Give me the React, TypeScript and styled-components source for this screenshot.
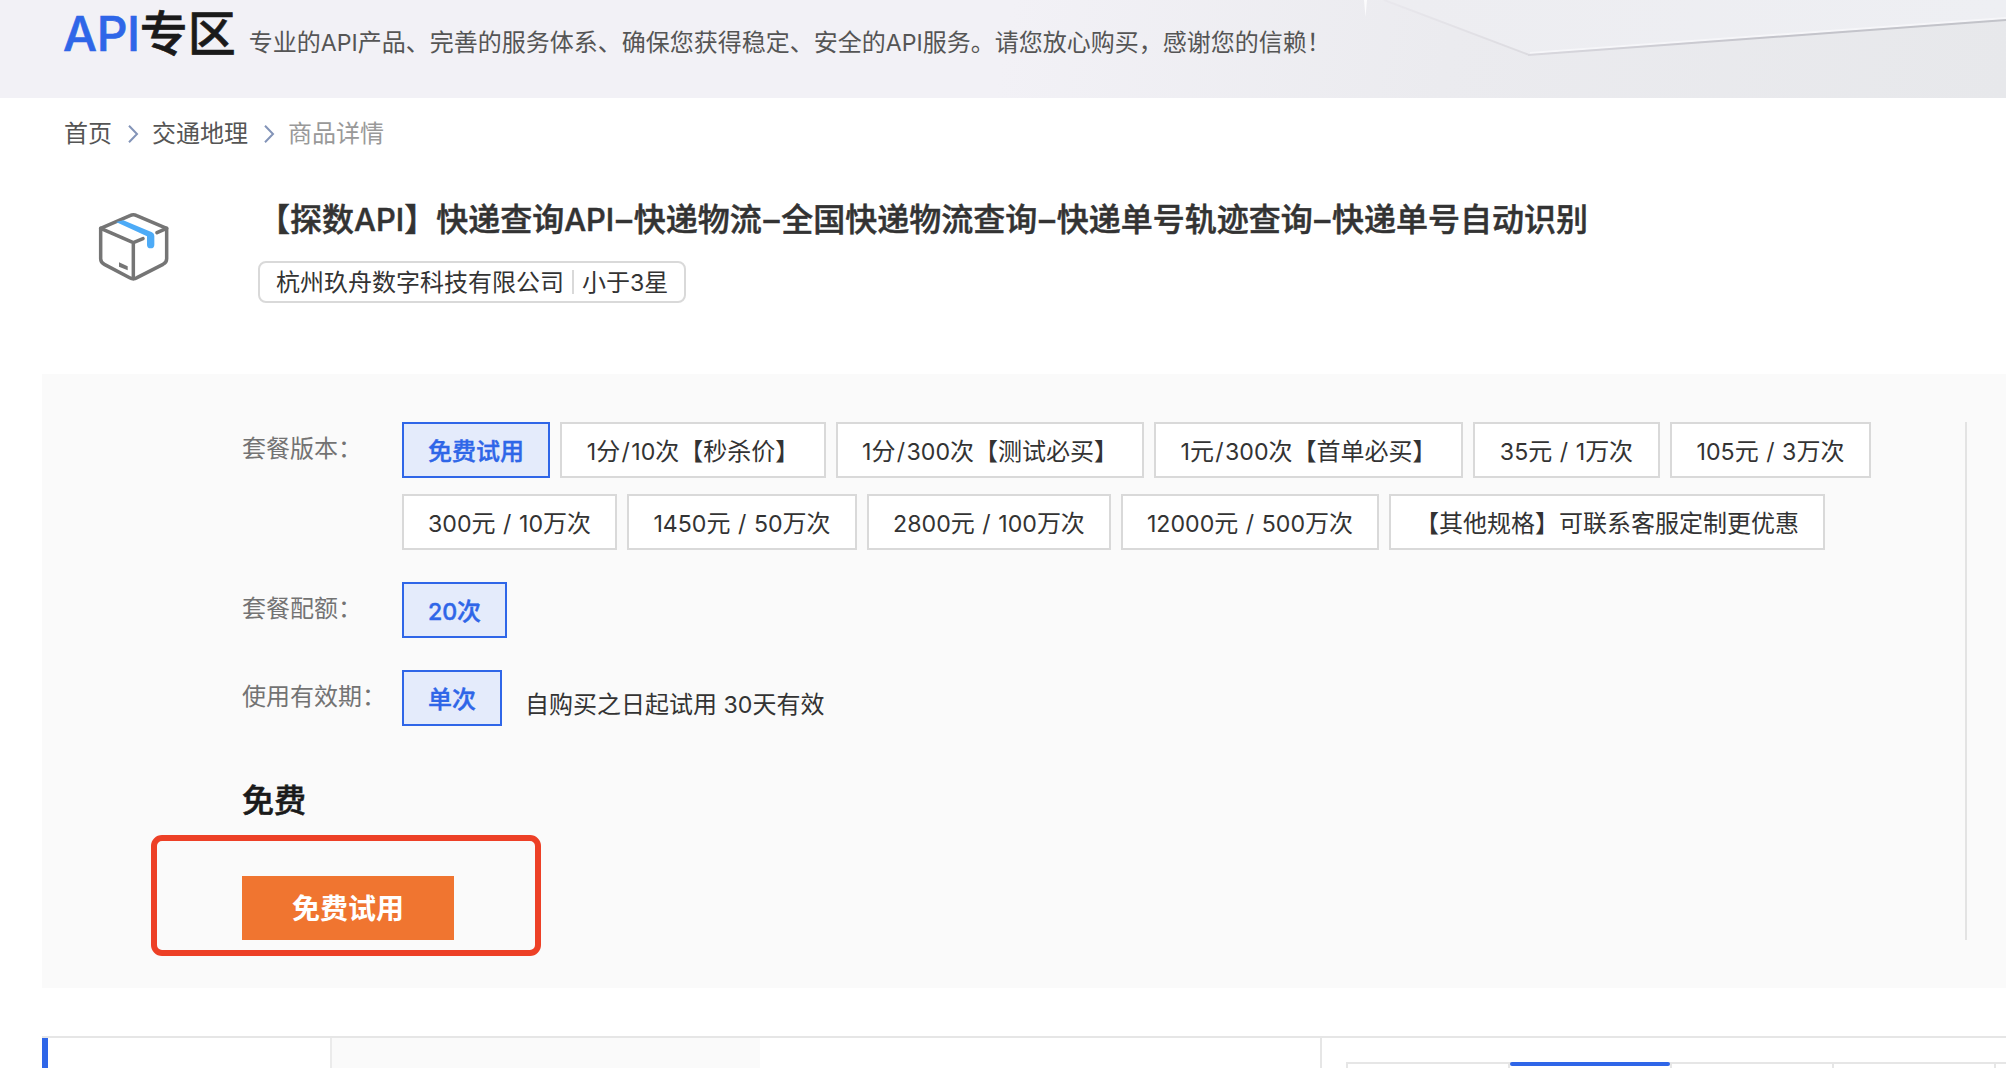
import React from "react";
import styled, { createGlobalStyle } from "styled-components";

const GlobalStyle = createGlobalStyle`
  *, *::before, *::after { box-sizing: border-box; }
  body {
    margin: 0;
    background: #fff;
    font-family: Inter, "Noto Sans CJK SC", sans-serif;
    font-size: 24px;
    color: #333;
  }
`;

const Page = styled.div`
  height: 1068px;
  overflow: hidden;
  display: flex;
  flex-direction: column;
  white-space: nowrap;
`;

const Banner = styled.header`
  position: relative;
  height: 98px;
  flex: none;
  padding-left: 63px;
  background: linear-gradient(100deg, #f2f1f6 50%, #ebebef 72%, #e7e8eb 100%);
`;

const BannerArt = styled.svg`
  position: absolute;
  right: 0;
  top: 0;
`;

const BannerText = styled.div`
  position: relative;
  display: flex;
  align-items: baseline;
`;

const Logo = styled.h1`
  margin: 0;
  font-size: 48px;
  line-height: 68px;
  font-weight: 500;
  color: #1a1a1a;
  -webkit-text-stroke: 0.6px currentColor;
`;

const LogoAccent = styled.span`
  letter-spacing: -0.4px;
  color: #2f66e8;
`;

const Slogan = styled.span`
  margin-left: 13px;
  color: #555;
`;

const LatinRun = styled.span`
  font-size: 0.965em;
  font-kerning: none;
  font-feature-settings: "calt" 0;
`;

const Slash = styled.span<{ $tight: boolean }>`
  padding: 0 ${(p) => (p.$tight ? "0.06em" : "0.045em")};
`;

const Dash = styled.span`
  padding: 0 0.054em;
`;

const Breadcrumb = styled.nav`
  display: flex;
  align-items: center;
  height: 67px;
  margin-bottom: 3px;
  flex: none;
  padding-left: 64px;
`;

const Crumb = styled.span<{ $current?: boolean }>`
  color: ${(p) => (p.$current ? "#999" : "#555")};
`;

const CrumbArrow = styled.svg`
  margin: 4px 13px 0 15px;
`;

const Product = styled.section`
  display: flex;
  height: 206px;
  flex: none;
  padding: 30px 0 0 80px;
`;

const ProductIcon = styled.svg`
  margin-top: 2px;
  flex: none;
`;

const ProductInfo = styled.div`
  margin-left: 68px;
`;

const Title = styled.h2`
  margin: 1px 0 0;
  font-size: 32px;
  line-height: 42px;
  font-weight: 500;
  -webkit-text-stroke: 0.5px currentColor;
`;

const Supplier = styled.div`
  display: inline-flex;
  align-items: center;
  height: 42px;
  margin-top: 20px;
  padding: 0 16px 4px 16px;
  border: 2px solid #d9d9d9;
  border-radius: 8px;
`;

const Divider = styled.i`
  width: 2px;
  height: 24px;
  margin: 4px 8px 0;
  background: #d9d9d9;
`;

const Panel = styled.section`
  display: flex;
  height: 614px;
  flex: none;
  margin-left: 42px;
  padding: 48px 39px 48px 200px;
  background: #fafafa;
`;

const Options = styled.div`
  flex: 1;
  display: flex;
  flex-direction: column;
  border-right: 2px solid #e3e3e3;
`;

const OptionRow = styled.div`
  display: flex;
  align-items: flex-start;
  height: 56px;
  margin-bottom: 32px;
`;

const VersionRow = styled(OptionRow)`
  height: 128px;
`;

const Label = styled.div`
  width: 160px;
  flex: none;
  line-height: 54px;
  color: #737373;
`;

const Tags = styled.div`
  width: 1490px;
  display: flex;
  flex-wrap: wrap;
  gap: 16px 10px;
`;

const Tag = styled.button<{ $active?: boolean; $width: number }>`
  width: ${(p) => p.$width}px;
  height: 56px;
  margin: 0;
  padding: 2px 0 0;
  font: inherit;
  line-height: 52px;
  white-space: nowrap;
  font-weight: ${(p) => (p.$active ? 500 : 400)};
  -webkit-text-stroke: ${(p) => (p.$active ? "0.4px currentColor" : "0")};
  color: ${(p) => (p.$active ? "#2f66e8" : "#333")};
  background: ${(p) => (p.$active ? "#e4ebfb" : "#fff")};
  border: 2px solid ${(p) => (p.$active ? "#2f66e8" : "#d9d9d9")};
`;

const Note = styled.span`
  margin-left: 23px;
  line-height: 70px;
`;

const Price = styled.div`
  margin-top: 20px;
  font-size: 32px;
  line-height: 46px;
  font-weight: 500;
  color: #1a1a1a;
  -webkit-text-stroke: 0.6px currentColor;
`;

const BuyArea = styled.div`
  position: relative;
  width: 212px;
  margin-top: auto;
`;

const BuyButton = styled.button`
  display: block;
  width: 212px;
  height: 64px;
  padding: 0 0 2px;
  border: 0;
  font: inherit;
  font-size: 28px;
  font-weight: 700;
  color: #fff;
  background: #f07530;
`;

const Highlight = styled.div`
  position: absolute;
  left: -91px;
  top: -41px;
  width: 390px;
  height: 121px;
  border: 6px solid #ed4026;
  border-radius: 11px;
`;

const Detail = styled.section`
  display: flex;
  flex: 1;
  margin: 48px 0 0 42px;
  border-top: 2px solid #e6e6e6;
`;

const SideTab = styled.div`
  width: 290px;
  flex: none;
  border-left: 6px solid #2f66e8;
  border-right: 2px solid #ebebeb;
`;

const SideTabIdle = styled.div`
  width: 428px;
  flex: none;
  background: #fafafa;
`;

const Main = styled.div`
  width: 560px;
  flex: none;
`;

const Aside = styled.div`
  flex: 1;
  min-width: 0;
  padding: 24px 0 0 24px;
  border-left: 2px solid #e6e6e6;
`;

const AsideTabs = styled.div`
  display: flex;
  height: 6px;
  border-left: 2px solid #e6e6e6;
`;

const AsideTab = styled.div<{ $active?: boolean }>`
  position: relative;
  width: 162px;
  flex: none;
  border-top: 2px solid #e6e6e6;
  border-right: 2px solid #e6e6e6;
  &::before {
    content: "";
    display: ${(p) => (p.$active ? "block" : "none")};
    position: absolute;
    left: 0;
    right: 0;
    top: -2px;
    height: 4px;
    border-radius: 2px;
    background: #2f66e8;
  }
`;

const renderPart = (part: string, i: number) => {
  if (part === "–") return <Dash key={i}>{part}</Dash>;
  if (/^[A-Za-z0-9/ ]+$/.test(part)) {
    return (
      <LatinRun key={i}>
        {part.split("/").map((piece, n) => (
          <React.Fragment key={n}>
            {n > 0 && <Slash $tight={!part.includes(" ")}>/</Slash>}
            {piece}
          </React.Fragment>
        ))}
      </LatinRun>
    );
  }
  return part;
};

/* Sets Latin letters and digits slightly smaller than the Chinese text around them. */
const Mixed = ({ text }: { text: string }) => (
  <>{text.split(/([A-Za-z0-9/ ]+|–)/).filter(Boolean).map(renderPart)}</>
);

const Arrow = () => (
  <CrumbArrow width="12" height="20" viewBox="0 0 12 20" fill="none" stroke="#8394b8" strokeWidth="2">
    <path d="M2 1.8 L10 10 L2 18.2" />
  </CrumbArrow>
);

const versions = [
  { name: "免费试用", width: 148 },
  { name: "1分/10次【秒杀价】", width: 266 },
  { name: "1分/300次【测试必买】", width: 308 },
  { name: "1元/300次【首单必买】", width: 309 },
  { name: "35元 / 1万次", width: 187 },
  { name: "105元 / 3万次", width: 201 },
  { name: "300元 / 10万次", width: 215 },
  { name: "1450元 / 50万次", width: 230 },
  { name: "2800元 / 100万次", width: 244 },
  { name: "12000元 / 500万次", width: 258 },
  { name: "【其他规格】可联系客服定制更优惠", width: 436 },
];

export default function App() {
  return (
    <>
      <GlobalStyle />
      <Page>
        <Banner>
          <BannerArt width="706" height="98" viewBox="1300 0 706 98" fill="none">
            <defs>
              <linearGradient id="edge" x1="1528" x2="2006" y1="0" y2="0" gradientUnits="userSpaceOnUse">
                <stop offset="0" stopColor="#d9d8de" />
                <stop offset="0.5" stopColor="#c4c4cb" />
                <stop offset="1" stopColor="#c2c3c9" />
              </linearGradient>
              <linearGradient id="sheet" x1="1400" x2="2006" y1="0" y2="0" gradientUnits="userSpaceOnUse">
                <stop offset="0" stopColor="#ededf1" />
                <stop offset="1" stopColor="#eeeff3" />
              </linearGradient>
              <linearGradient id="fold" x1="1384" x2="1528" y1="0" y2="0" gradientUnits="userSpaceOnUse">
                <stop offset="0" stopColor="#e9e8ed" />
                <stop offset="1" stopColor="#dcdbe0" />
              </linearGradient>
            </defs>
            <path d="M1384 0 L1528 54.5 L2006 19.5 V0 Z" fill="url(#sheet)" />
            <path d="M1530 53 L2006 18" stroke="#f6f6f9" strokeWidth="2" />
            <path d="M1384 0 L1528 54.5" stroke="url(#fold)" strokeWidth="2" />
            <path d="M1528 55 L2006 20" stroke="url(#edge)" strokeWidth="2" />
            <path d="M1364 0 H1367 L1365.5 17 Z" fill="#fcfcfd" />
          </BannerArt>
          <BannerText>
            <Logo>
              <LogoAccent>API</LogoAccent>专区
            </Logo>
            <Slogan>
              <Mixed text="专业的API产品、完善的服务体系、确保您获得稳定、安全的API服务。请您放心购买，感谢您的信赖！" />
            </Slogan>
          </BannerText>
        </Banner>

        <Breadcrumb>
          <Crumb>首页</Crumb>
          <Arrow />
          <Crumb>交通地理</Crumb>
          <Arrow />
          <Crumb $current>商品详情</Crumb>
        </Breadcrumb>

        <Product>
          <ProductIcon width="110" height="90" viewBox="0 0 330 270" fill="none" strokeLinecap="round" strokeLinejoin="round">
            <path
              d="M62 85 L150 47 Q160 42 170 47 L260 85 V176 Q260 187 249 193 L171 233 Q160 239 149 233 L73 193 Q62 187 62 176 Z"
              stroke="#757575"
              strokeWidth="10.5"
            />
            <path d="M62 85 L160 128 L189 116 M160 128 V236 M231 98 L260 85" stroke="#757575" strokeWidth="10.5" />
            <path d="M108 66 L130 61 L216 97 Q223 100 223 108 V134 A11 11 0 0 1 201 134 V109 Z" fill="#4dabf7" />
            <path d="M117 187 L143 199 V211 L117 200 Z" fill="#757575" />
          </ProductIcon>
          <ProductInfo>
            <Title>
              <Mixed text="【探数API】快递查询API–快递物流–全国快递物流查询–快递单号轨迹查询–快递单号自动识别" />
            </Title>
            <Supplier>
              杭州玖舟数字科技有限公司
              <Divider />
              <span>
                <Mixed text="小于3星" />
              </span>
            </Supplier>
          </ProductInfo>
        </Product>

        <Panel>
          <Options>
            <VersionRow>
              <Label>套餐版本：</Label>
              <Tags>
                {versions.map((v, i) => (
                  <Tag key={v.name} $width={v.width} $active={i === 0}>
                    <Mixed text={v.name} />
                  </Tag>
                ))}
              </Tags>
            </VersionRow>
            <OptionRow>
              <Label>套餐配额：</Label>
              <Tag $active $width={105}>
                <Mixed text="20次" />
              </Tag>
            </OptionRow>
            <OptionRow>
              <Label>使用有效期：</Label>
              <Tag $active $width={100}>
                单次
              </Tag>
              <Note>
                <Mixed text="自购买之日起试用 30天有效" />
              </Note>
            </OptionRow>
            <Price>免费</Price>
            <BuyArea>
              <BuyButton>免费试用</BuyButton>
              <Highlight />
            </BuyArea>
          </Options>
        </Panel>

        <Detail>
          <SideTab />
          <SideTabIdle />
          <Main />
          <Aside>
            <AsideTabs>
              <AsideTab />
              <AsideTab $active />
              <AsideTab />
              <AsideTab />
              <AsideTab />
            </AsideTabs>
          </Aside>
        </Detail>
      </Page>
    </>
  );
}
